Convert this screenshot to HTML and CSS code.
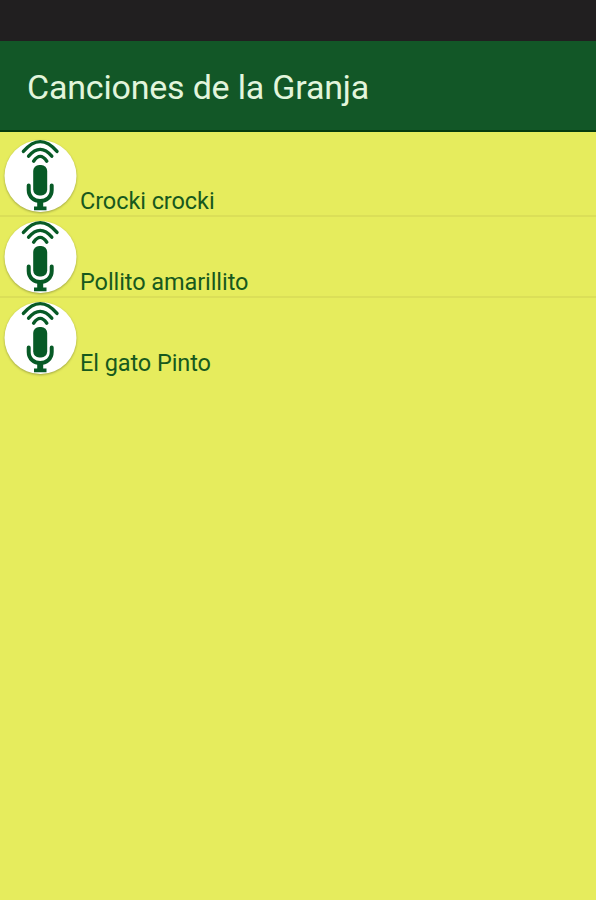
FILE: index.html
```html
<!DOCTYPE html>
<html lang="es">

<head>
    <meta charset="utf-8">
    <meta name="viewport" content="width=device-width, initial-scale=1.0">
    <title>Canciones de la Granja</title>
    <link rel="stylesheet" href="styles.css">
</head>

<body>
    <div class="barra_estado"></div>
    <header>
        <h1>Canciones de la Granja</h1>
    </header>

    <!-- icono del micrófono, se usa en cada canción -->
    <svg class="simbolos" width="0" height="0">
        <symbol id="microfono" viewBox="0 0 80 79">
            <circle cx="40.5" cy="40" r="36" fill="#fff" />
            <g fill="none" stroke="#075a26" stroke-width="3.4" stroke-linecap="round">
                <path d="M23.4 15.4Q40.2 -4.2 57 15.4" />
                <path d="M28.6 20.2Q40.2 6.6 51.8 20.2" />
                <path d="M33.6 25.2Q40.2 15.6 46.8 25.2" />
                <path d="M28.7 49.5V54C28.7 68.6 51.7 68.6 51.7 54V49.5" stroke-width="4" />
            </g>
            <rect x="33.2" y="29" width="14" height="30.5" rx="6" fill="#075a26" />
            <path d="M37.2 65H43.2V70.5H46.5V74.3H34V70.5H37.2Z" fill="#075a26" />
        </symbol>
    </svg>

    <ul class="lista">
        <li class="cancion">
            <svg class="icono"><use href="#microfono" /></svg>
            <span class="nombre">Crocki crocki</span>
        </li>
        <li class="cancion">
            <svg class="icono"><use href="#microfono" /></svg>
            <span class="nombre">Pollito amarillito</span>
        </li>
        <li class="cancion">
            <svg class="icono"><use href="#microfono" /></svg>
            <span class="nombre">El gato Pinto</span>
        </li>
    </ul>
</body>

</html>
```
FILE: styles.css
```css
body {
    background-color: #e6ec5d;
    font-family: Roboto, sans-serif;
    margin: 0px;
}

.barra_estado {
    height: 41px;
    background-color: #211f20;
}

header {
    box-sizing: border-box;
    display: flex;
    align-items: center;
    height: 91px;
    padding: 2px 0px 0px 27px;
    background-color: #125727;
    border-bottom: 2px solid #063b0e;
}

h1 {
    margin: 0px;
    font-size: 34px;
    font-weight: 400;
    letter-spacing: -0.2px;
    color: #e2f5dc;
    white-space: nowrap;
}

.simbolos {
    display: block;
}

.lista {
    list-style: none;
    margin: 0px;
    padding: 4px 0px 0px 0px;
}

.cancion {
    box-sizing: border-box;
    display: flex;
    align-items: flex-end;
    height: 81px;
    border-bottom: 2px solid #dbdf58;
}

.cancion:last-child {
    border-bottom-color: transparent;
}

.icono {
    width: 80px;
    height: 79px;
    filter: drop-shadow(0px 1px 1px rgba(90, 95, 40, 0.5));
}

.nombre {
    font-size: 23.5px;
    line-height: 28px;
    letter-spacing: -0.08px;
    color: #17591d;
    white-space: nowrap;
}
```
